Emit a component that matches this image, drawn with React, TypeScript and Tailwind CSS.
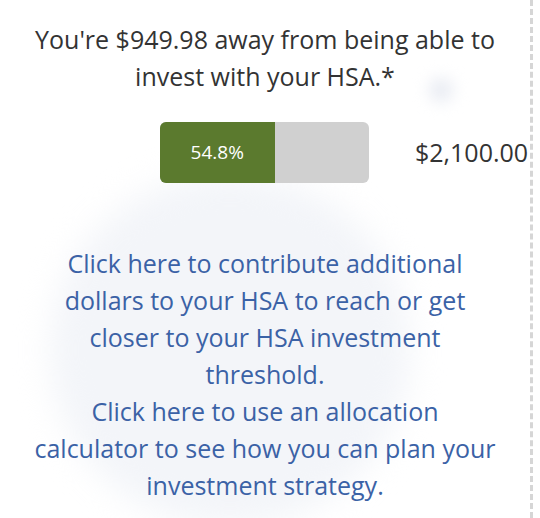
const App = () => {
  const percent = 54.8;

  return (
    <div className="relative w-[540px] h-[518px] overflow-hidden bg-white" style={{ fontFamily: '"Open Sans", "Noto Sans", sans-serif' }}>
      {/* blurred page behind the panel */}
      <div className="absolute left-[50px] top-[175px] w-[360px] h-[350px] rounded-full bg-[#f3f5f9] blur-lg"></div>
      <div className="absolute left-[429px] top-[78px] w-[24px] h-[24px] rounded-full bg-[#e8ebf2] blur-sm"></div>

      {/* dashed divider on the right */}
      <div className="absolute left-[530px] top-0 h-full border-l-[3px] border-dashed border-[#d6d6d6]"></div>

      <div className="relative w-[530px] flex flex-col items-center">
        <p className="mt-[21px] text-[25px] leading-[37px] text-[#333333] text-center">
          You're $949.98 away from being able to
          <br />
          invest with your HSA.*
        </p>

        <div className="self-stretch mt-[27px] pl-[160px] flex items-center">
          <div className="w-[209px] h-[61px] rounded-[6px] bg-[#d0d0d0] overflow-hidden flex">
            <div className="h-full bg-[#5b7a2e] flex items-center justify-center text-white text-[19px]" style={{ width: `${(percent / 100) * 209}px` }}>
              {percent}%
            </div>
          </div>
          <span className="ml-[46px] text-[25px] text-[#333333] whitespace-nowrap">$2,100.00</span>
        </div>

        <div className="mt-[62px] text-[25px] leading-[37px] text-[#3b62a6] text-center">
          <a className="block">
            Click here to contribute additional
            <br />
            dollars to your HSA to reach or get
            <br />
            closer to your HSA investment
            <br />
            threshold.
          </a>
          <a className="block">
            Click here to use an allocation
            <br />
            calculator to see how you can plan your
            <br />
            investment strategy.
          </a>
        </div>
      </div>
    </div>
  );
};

export default App;
